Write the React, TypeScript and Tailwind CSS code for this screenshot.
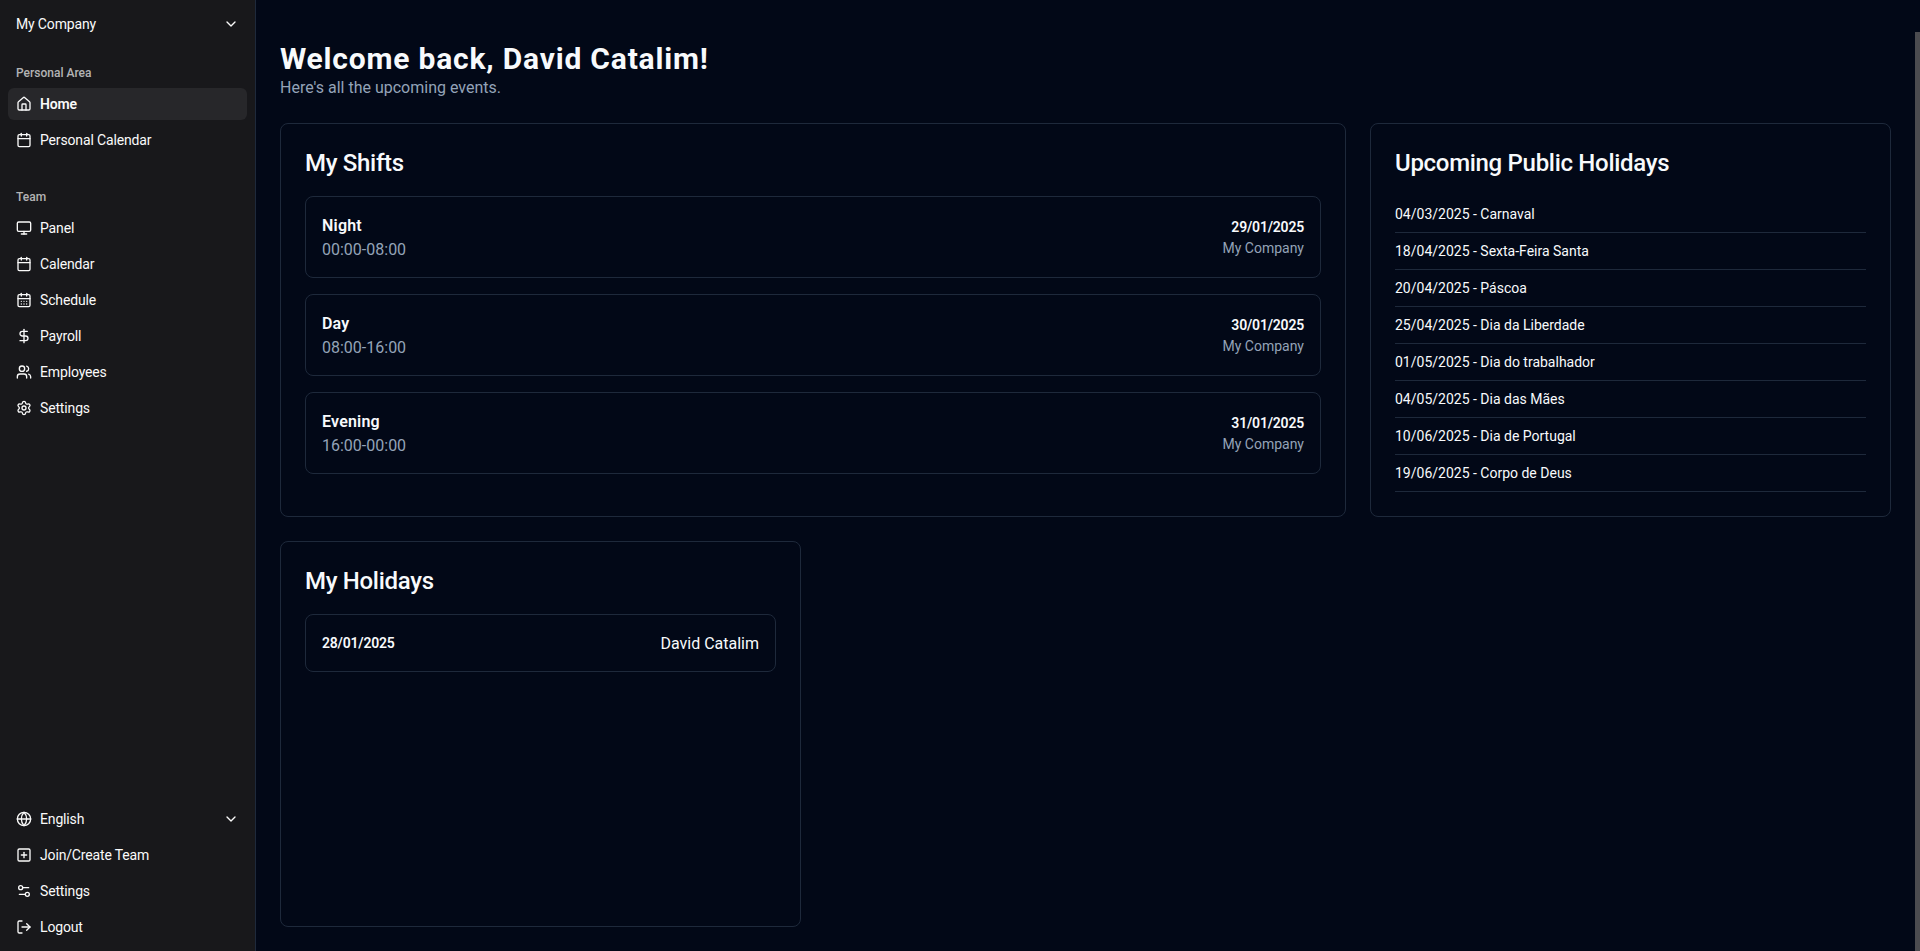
import { ChevronDown, House, Calendar, Monitor, CalendarDays, DollarSign, Users, Settings, Globe, SquarePlus, Settings2, LogOut } from "lucide-react";
import type { ComponentType } from "react";

type Icon = ComponentType<{ className?: string }>;

function NavItem({ icon: I, label, active, chevron }: { icon?: Icon; label: string; active?: boolean; chevron?: boolean }) {
  return (
    <div className={`flex h-8 items-center gap-2 rounded-md px-2 text-sm tracking-[-0.15px] text-[#fafafa] ${active ? "bg-[#27272a] font-semibold" : ""}`}>
      {I && <I className="h-4 w-4 shrink-0" />}
      <span className="flex-1">{label}</span>
      {chevron && <ChevronDown className="h-4 w-4 shrink-0" />}
    </div>
  );
}

function Group({ label, items }: { label: string; items: { icon: Icon; label: string; active?: boolean }[] }) {
  return (
    <div className="p-2">
      <div className="flex h-8 items-center px-2 pt-[2px] text-xs font-medium text-[#fafafa]/70">{label}</div>
      <div className="flex flex-col gap-1">
        {items.map((it) => (
          <NavItem key={it.label} {...it} />
        ))}
      </div>
    </div>
  );
}

function Shift({ name, time, date }: { name: string; time: string; date: string }) {
  return (
    <div className="flex items-center justify-between rounded-lg border border-[#1e293b] p-4">
      <div>
        <div className="h-6 leading-[26px] font-semibold tracking-[0.2px]">{name}</div>
        <div className="h-6 leading-[26px] text-[#94a3b8]">{time}</div>
      </div>
      <div className="text-right text-sm">
        <div className="font-semibold tracking-[-0.2px]">{date}</div>
        <div className="h-5 leading-[22px] text-[#94a3b8]">My Company</div>
      </div>
    </div>
  );
}

const holidays = [
  "04/03/2025 - Carnaval",
  "18/04/2025 - Sexta-Feira Santa",
  "20/04/2025 - Páscoa",
  "25/04/2025 - Dia da Liberdade",
  "01/05/2025 - Dia do trabalhador",
  "04/05/2025 - Dia das Mães",
  "10/06/2025 - Dia de Portugal",
  "19/06/2025 - Corpo de Deus",
];

function CardTitle({ children }: { children: string }) {
  return <h2 className="mb-4 h-8 text-2xl leading-[30px] font-medium tracking-[-0.3px]">{children}</h2>;
}

export default function App() {
  return (
    <div className="flex h-[951px] overflow-hidden bg-[#020817] font-['Roboto','Noto_Sans',sans-serif] text-[#f8fafc]">
      <aside className="flex w-64 shrink-0 flex-col border-r border-[#1e293b] bg-[#18181b]">
        <div className="p-2">
          <NavItem label="My Company" chevron />
        </div>
        <div className="flex flex-1 flex-col gap-2">
          <Group
            label="Personal Area"
            items={[
              { icon: House, label: "Home", active: true },
              { icon: Calendar, label: "Personal Calendar" },
            ]}
          />
          <Group
            label="Team"
            items={[
              { icon: Monitor, label: "Panel" },
              { icon: Calendar, label: "Calendar" },
              { icon: CalendarDays, label: "Schedule" },
              { icon: DollarSign, label: "Payroll" },
              { icon: Users, label: "Employees" },
              { icon: Settings, label: "Settings" },
            ]}
          />
        </div>
        <div className="flex flex-col gap-1 p-2">
          <NavItem icon={Globe} label="English" chevron />
          <NavItem icon={SquarePlus} label="Join/Create Team" />
          <NavItem icon={Settings2} label="Settings" />
          <NavItem icon={LogOut} label="Logout" />
        </div>
      </aside>
      <main className="relative flex-1 pt-[39px] pr-[29px] pl-6">
        <h1 className="h-9 text-3xl leading-[40px] font-bold tracking-[0.8px]">Welcome back, David Catalim!</h1>
        <p className="mb-6 h-6 leading-[26px] text-[#94a3b8]">Here's all the upcoming events.</p>
        <div className="grid grid-cols-3 gap-6">
          <section className="col-span-2 rounded-lg border border-[#1e293b] p-6">
            <CardTitle>My Shifts</CardTitle>
            <div className="flex flex-col gap-4">
              <Shift name="Night" time="00:00-08:00" date="29/01/2025" />
              <Shift name="Day" time="08:00-16:00" date="30/01/2025" />
              <Shift name="Evening" time="16:00-00:00" date="31/01/2025" />
            </div>
          </section>
          <section className="rounded-lg border border-[#1e293b] p-6">
            <CardTitle>Upcoming Public Holidays</CardTitle>
            <div>
              {holidays.map((h) => (
                <div key={h} className="border-b border-[#1e293b] py-2 text-sm">{h}</div>
              ))}
            </div>
          </section>
          <section className="h-[386px] rounded-lg border border-[#1e293b] p-6">
            <CardTitle>My Holidays</CardTitle>
            <div className="flex items-center justify-between rounded-lg border border-[#1e293b] p-4">
              <span className="text-sm leading-[22px] font-semibold tracking-[-0.2px]">28/01/2025</span>
              <span className="h-6 leading-[26px]">David Catalim</span>
            </div>
          </section>
        </div>
        <div className="absolute top-[32px] right-0 bottom-0 w-[5px] bg-[#4b4b4f]" />
      </main>
    </div>
  );
}
